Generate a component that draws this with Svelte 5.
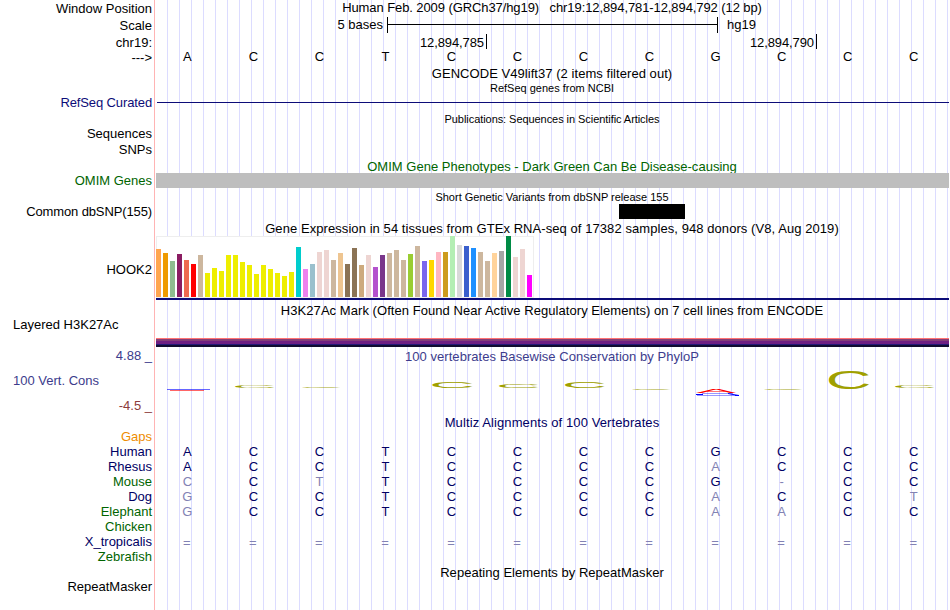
<script lang="ts">
	interface Species {
		name: string;
		color: string;
		bases: string;
		faded?: number[];
	}

	interface LogoLetter {
		base: string;
		x: number;
		y: number;
		width: number;
		height: number;
		color: string;
		opacity?: number;
	}

	const sequence = 'ACCTCCCCGCCC'.split('');

	// One bar per GTEx tissue: height in pixels, color
	const tissues: [number, string][] = [
		[48, '#ffa54f'], [44, '#ee9a00'], [36, '#8fbc8f'], [43, '#8b1c62'], [37, '#ee6a50'], [33, '#ff0000'],
		[42, '#cdb79e'], [24, '#eeee00'], [29, '#eeee00'], [26, '#eeee00'], [42, '#eeee00'], [42, '#eeee00'],
		[35, '#eeee00'], [32, '#eeee00'], [23, '#eeee00'], [32, '#eeee00'], [28, '#eeee00'], [24, '#eeee00'],
		[21, '#eeee00'], [25, '#eeee00'], [50, '#00cdcd'], [28, '#ee82ee'], [33, '#9ac0cd'], [45, '#eed5d2'],
		[47, '#eed5d2'], [37, '#cdb79e'], [44, '#eec591'], [33, '#8b7355'], [49, '#8b7355'], [32, '#cdaa7d'],
		[42, '#eed5d2'], [30, '#b452cd'], [42, '#7a378b'], [44, '#cdb79e'], [47, '#cdb79e'], [37, '#cdb79e'],
		[43, '#9acd32'], [51, '#cdb79e'], [36, '#7a67ee'], [37, '#ffd700'], [45, '#ffb6c1'], [45, '#cd9b1d'],
		[61, '#b4eeb4'], [52, '#d9d9d9'], [51, '#3a5fcd'], [49, '#1e90ff'], [45, '#cdb79e'], [36, '#cdb79e'],
		[44, '#ffd39b'], [46, '#a6a6a6'], [61, '#008b45'], [40, '#eed5d2'], [48, '#eed5d2'], [22, '#ff00ff']
	];

	const species: Species[] = [
		{ name: 'Gaps', color: '#ee8c00', bases: '' },
		{ name: 'Human', color: '#000064', bases: 'ACCTCCCCGCCC' },
		{ name: 'Rhesus', color: '#000064', bases: 'ACCTCCCCACCC', faded: [8] },
		{ name: 'Mouse', color: '#006400', bases: 'CCTTCCCCG-CC', faded: [0, 2, 9] },
		{ name: 'Dog', color: '#000064', bases: 'GCCTCCCCACCT', faded: [0, 8, 11] },
		{ name: 'Elephant', color: '#006400', bases: 'GCCTCCCCAACC', faded: [0, 8, 9] },
		{ name: 'Chicken', color: '#006400', bases: '' },
		{ name: 'X_tropicalis', color: '#000064', bases: '============', faded: [0, 1, 2, 3, 4, 5, 6, 7, 8, 9, 10, 11] },
		{ name: 'Zebrafish', color: '#006400', bases: '' }
	];

	const olive = '#a0a000';

	const logo: LogoLetter[] = [
		{ base: 'C', x: 80, y: 20.6, width: 39, height: 2.2, color: olive },
		{ base: 'C', x: 147, y: 22.2, width: 38, height: 1, color: olive, opacity: 0.9 },
		{ base: 'C', x: 277.5, y: 16, width: 40, height: 7, color: olive },
		{ base: 'C', x: 344, y: 19, width: 39, height: 4, color: olive },
		{ base: 'C', x: 410, y: 17, width: 39.5, height: 6, color: olive },
		{ base: 'C', x: 477, y: 23.8, width: 38, height: 1, color: olive, opacity: 0.9 },
		{ base: 'C', x: 609, y: 23.8, width: 38, height: 1, color: olive, opacity: 0.9 },
		{ base: 'C', x: 674, y: 6, width: 40, height: 18, color: olive },
		{ base: 'C', x: 740, y: 20.7, width: 39, height: 2.2, color: olive },
		{ base: 'A', x: 541, y: 24, width: 40, height: 4, color: '#ff0000' }
	];

	// Stretches a 10px glyph so that its ink fills the letter's box
	function stretch({ base, x, y, width, height }: LogoLetter): string {
		const round = base !== 'A';
		const sx = width / (round ? 6.33 : 6.64);
		const sy = height / (round ? 7.1 : 6.88);
		return `translate(${x - (round ? 0.5 * sx : 0)} ${y + height - (round ? 0.1 * sy : 0)}) scale(${sx} ${sy})`;
	}
</script>

<div class="browser">
	<div class="row position">
		<div class="label">Window Position</div>
		<div class="title">Human Feb. 2009 (GRCh37/hg19)   chr19:12,894,781-12,894,792 (12 bp)</div>
	</div>

	<div class="row scale">
		<div class="label">Scale</div>
		<div class="track">
			<span class="scale-text">5 bases</span>
			<span class="scale-bar"><i></i></span>
			<span>hg19</span>
		</div>
	</div>

	<div class="row ruler">
		<div class="label">chr19:</div>
		<div class="track">
			<span class="tick first">12,894,785</span>
			<span class="tick">12,894,790</span>
		</div>
	</div>

	<div class="row strand">
		<div class="label">---&gt;</div>
		<div class="bases">
			{#each sequence as base}
				<span>{base}</span>
			{/each}
		</div>
	</div>

	<div class="row gencode">
		<div class="label"></div>
		<div class="title">GENCODE V49lift37 (2 items filtered out)</div>
	</div>
	<div class="row refseq-title">
		<div class="label"></div>
		<div class="title small">RefSeq genes from NCBI</div>
	</div>
	<div class="row refseq">
		<div class="label">RefSeq Curated</div>
		<div class="track"><div class="intron"></div></div>
	</div>

	<div class="row publications">
		<div class="label"></div>
		<div class="title small">Publications: Sequences in Scientific Articles</div>
	</div>
	<div class="row item">
		<div class="label">Sequences</div>
	</div>
	<div class="row item">
		<div class="label">SNPs</div>
	</div>

	<div class="row omim-title">
		<div class="label"></div>
		<div class="title green">OMIM Gene Phenotypes - Dark Green Can Be Disease-causing</div>
	</div>
	<div class="row">
		<div class="label green">OMIM Genes</div>
		<div class="track"><div class="gene"></div></div>
	</div>

	<div class="row snp-title">
		<div class="label"></div>
		<div class="title small">Short Genetic Variants from dbSNP release 155</div>
	</div>
	<div class="row snp">
		<div class="label">Common dbSNP(155)</div>
		<div class="track"><div class="variant"></div></div>
	</div>

	<div class="row gtex-title">
		<div class="label"></div>
		<div class="title">Gene Expression in 54 tissues from GTEx RNA-seq of 17382 samples, 948 donors (V8, Aug 2019)</div>
	</div>
	<div class="row gtex">
		<div class="label">HOOK2</div>
		<div class="track">
			<div class="chart">
				{#each tissues as [height, color]}
					<div class="bar" style="height: {height}px; background: {color}"></div>
				{/each}
			</div>
			<div class="gene-line"></div>
		</div>
	</div>

	<div class="row h3k27ac">
		<div class="label left">Layered H3K27Ac</div>
		<div class="track">
			<div class="title">H3K27Ac Mark (Often Found Near Active Regulatory Elements) on 7 cell lines from ENCODE</div>
			<div class="layers"></div>
		</div>
	</div>

	<div class="row phylop">
		<div class="label">
			<div>4.88 _</div>
			<div class="left">100 Vert. Cons</div>
			<div class="min">-4.5 _</div>
		</div>
		<div class="track">
			<div class="title">100 vertebrates Basewise Conservation by PhyloP</div>
			<svg class="logo" width="794" height="34" viewBox="0 0 794 34">
				<path d="M12 24.5H55" stroke="#0000ff" stroke-opacity="0.6" />
				<path d="M15 25.5H49" stroke="#ff0000" stroke-opacity="0.6" />
				{#each logo as letter}
					<text transform={stretch(letter)} fill={letter.color} opacity={letter.opacity ?? 1}>{letter.base}</text>
				{/each}
				<!-- negative score, squeezed flat below the axis -->
				<path d="M547 28.5H578M542 30.5H584" stroke="#0000ff" stroke-opacity="0.4" />
				<path d="M541 29.5H548M573 28.5L578 29.5L584 30.5H580" stroke="#0000ff" fill="none" />
			</svg>
		</div>
	</div>

	<div class="row multiz">
		<div class="label"></div>
		<div class="title">Multiz Alignments of 100 Vertebrates</div>
	</div>
	{#each species as { name, color, bases, faded }}
		<div class="row alignment">
			<div class="label" style="color: {color}">{name}</div>
			<div class="bases">
				{#each bases.split('') as base, i}
					<span class:faded={faded?.includes(i)} class:gap={base === '='}>{base}</span>
				{/each}
			</div>
		</div>
	{/each}

	<div class="row repeat-title">
		<div class="label"></div>
		<div class="title">Repeating Elements by RepeatMasker</div>
	</div>
	<div class="row">
		<div class="label">RepeatMasker</div>
	</div>
</div>

<style>
	:global(body) {
		background: #fff;
	}

	.browser {
		box-sizing: border-box;
		width: 950px;
		height: 610px;
		overflow: hidden;
		font: 13px/15px 'Liberation Sans', Arial, sans-serif;
		color: #000;
		/* left edge of the tracks, then a guide line every 12px */
		background:
			linear-gradient(#ffb4b4, #ffb4b4) 154px 0 / 1px 100% no-repeat,
			repeating-linear-gradient(to right, #dcdcff 0 1px, transparent 1px 12px) 167px 0 / 783px 100% no-repeat;
	}

	.row {
		display: grid;
		grid-template-columns: 152px 794px;
		column-gap: 3px;
		height: 15px;
	}

	.label {
		text-align: right;
		white-space: nowrap;
	}

	.left {
		padding-left: 13px;
		text-align: left;
	}

	.title {
		text-align: center;
		white-space: pre;
	}

	.small {
		font-size: 11px;
	}

	.green {
		color: #006400;
	}

	.bases {
		display: grid;
		grid-template-columns: repeat(12, 66.04px);
		margin-left: -0.7px;
		text-align: center;
	}

	/* Ruler */
	.position {
		height: 16px;
	}

	.position .label {
		padding-top: 1px;
	}

	.position .title {
		letter-spacing: -0.09px;
	}

	.scale {
		height: 17px;
	}

	.scale .label {
		padding-top: 2px;
	}

	.scale .track {
		display: flex;
		padding-top: 1px;
	}

	.scale-text {
		width: 228px;
		text-align: right;
	}

	.scale-bar {
		box-sizing: border-box;
		display: flex;
		align-items: center;
		width: 331px;
		height: 16px;
		margin: 0 9px 0 4px;
		border: solid #000;
		border-width: 0 1px;
	}

	.scale-bar i {
		flex: 1;
		height: 1px;
		margin-bottom: 1px;
		background: #000;
	}

	.ruler {
		height: 16px;
	}

	.ruler .label {
		padding-top: 2px;
	}

	.ruler .track {
		display: flex;
		padding-top: 1px;
	}

	.tick {
		box-sizing: border-box;
		width: 330px;
		height: 15px;
		padding: 1px 2px 0 0;
		border-right: 1px solid #000;
		text-align: right;
		letter-spacing: -0.1px;
	}

	.tick.first {
		width: 332px;
	}

	.strand {
		height: 17px;
	}

	.strand .label {
		padding-top: 1px;
	}

	/* Genes and variants */
	.gencode .title {
		letter-spacing: 0.05px;
	}

	.refseq-title {
		height: 14px;
	}

	.refseq {
		color: #0c0c78;
		height: 17px;
	}

	.refseq .label,
	.snp .label {
		letter-spacing: -0.12px;
	}

	.intron {
		height: 1px;
		margin: 7px 0 0 2px;
		background: #0c0c78;
	}

	.publications {
		height: 14px;
		letter-spacing: -0.06px;
	}

	.item {
		height: 16px;
	}

	.omim-title {
		padding-top: 1px;
		height: 14px;
		letter-spacing: 0.02px;
	}

	.gene {
		height: 15px;
		margin-left: 1px;
		background: #bebebe;
	}

	.snp-title {
		padding-top: 2px;
		height: 14px;
	}

	.variant {
		width: 66px;
		height: 15px;
		margin-left: 464px;
		background: #000;
	}

	.gtex-title {
		padding-top: 2px;
		letter-spacing: 0.07px;
	}

	/* Tissue expression */
	.gtex {
		height: 64px;
	}

	.gtex .label {
		padding-top: 26px;
	}

	.gtex .track {
		padding-left: 1px;
	}

	.chart {
		box-sizing: border-box;
		display: flex;
		align-items: flex-end;
		gap: 2px;
		width: 378px;
		height: 62px;
		background: #fff;
		box-shadow: inset 0 0 0 1px #eee, inset 0 -1px #d8d8d8;
		padding-bottom: 1px;
	}

	.bar {
		width: 5px;
	}

	.gene-line {
		height: 2px;
		background: #0c0c78;
	}

	/* Histone mark */
	.h3k27ac {
		padding-top: 3px;
		height: 46px;
	}

	.h3k27ac .label {
		padding-top: 14px;
	}

	.h3k27ac .title {
		letter-spacing: 0.055px;
	}

	.layers {
		height: 9px;
		margin: 20px 0 0 1px;
		background: linear-gradient(
			#ff7373 0 1px,
			#843f78 1px 3px,
			#6e1f82 3px 6px,
			#241878 6px 7px,
			#100c30 7px 9px
		);
	}

	/* Conservation */
	.phylop {
		height: 66px;
		color: #3c3c8c;
	}

	.phylop .label {
		display: flex;
		flex-direction: column;
		gap: 10px;
		margin-top: -1px;
	}

	.phylop .min {
		color: #8c3c3c;
	}

	.phylop .title {
		letter-spacing: 0.04px;
	}

	.logo {
		display: block;
		margin-top: 1px;
		font-size: 10px;
	}

	.multiz {
		height: 14px;
		color: #000064;
		letter-spacing: 0.1px;
	}

	.alignment {
		color: #000064;
	}

	.faded {
		color: #8282b4;
	}

	.gap {
		margin-left: -1px;
		padding-top: 1px;
	}

	.repeat-title {
		padding-top: 1px;
		height: 14px;
		letter-spacing: 0.03px;
	}
</style>
